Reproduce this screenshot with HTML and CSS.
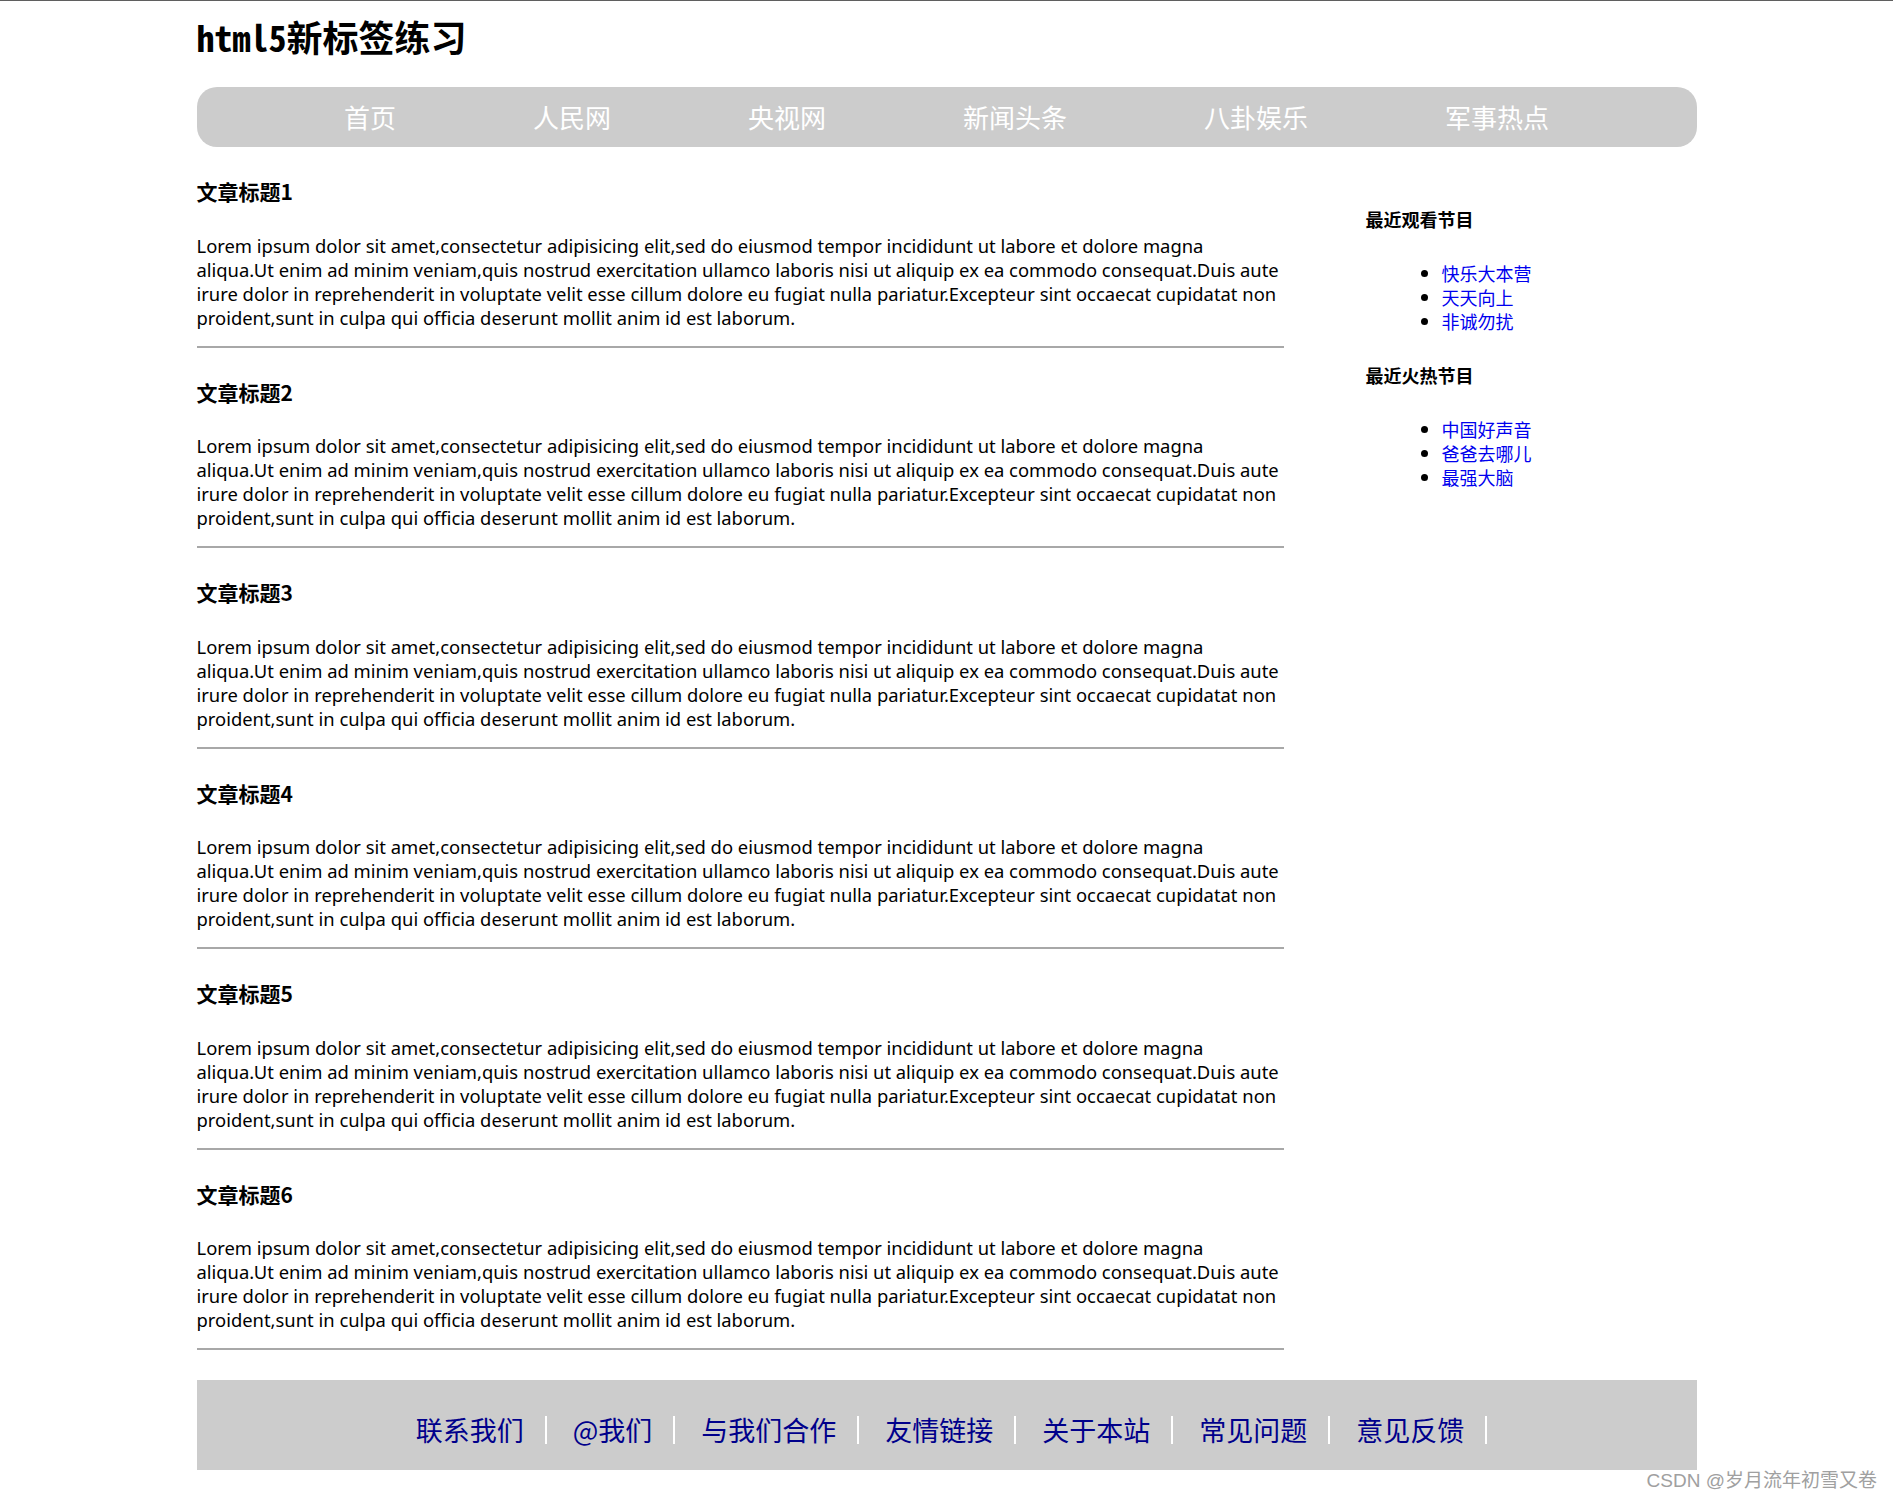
FILE: index.html
```html
<!DOCTYPE html>
<html lang="zh-CN">
<head>
<meta charset="utf-8">
<title>html5新标签练习</title>
<link rel="stylesheet" href="styles.css">
</head>
<body>
<div class="page">
  <header class="site-header">
    <h1 class="site-title">html5新标签练习</h1>
    <nav class="main-nav">
      <a href="#">首页</a>
      <a href="#">人民网</a>
      <a href="#">央视网</a>
      <a href="#">新闻头条</a>
      <a href="#">八卦娱乐</a>
      <a href="#">军事热点</a>
    </nav>
  </header>

  <div class="content">
    <main class="articles">
      <article class="post">
        <h2 class="post-title">文章标题1</h2>
        <p class="post-text">Lorem ipsum dolor sit amet,consectetur adipisicing elit,sed do eiusmod tempor incididunt ut labore et dolore magna<br>aliqua.Ut enim ad minim veniam,quis nostrud exercitation ullamco laboris nisi ut aliquip ex ea commodo consequat.Duis aute<br>irure dolor in reprehenderit in voluptate velit esse cillum dolore eu fugiat nulla pariatur.Excepteur sint occaecat cupidatat non<br>proident,sunt in culpa qui officia deserunt mollit anim id est laborum.</p>
      </article>
      <article class="post">
        <h2 class="post-title">文章标题2</h2>
        <p class="post-text">Lorem ipsum dolor sit amet,consectetur adipisicing elit,sed do eiusmod tempor incididunt ut labore et dolore magna<br>aliqua.Ut enim ad minim veniam,quis nostrud exercitation ullamco laboris nisi ut aliquip ex ea commodo consequat.Duis aute<br>irure dolor in reprehenderit in voluptate velit esse cillum dolore eu fugiat nulla pariatur.Excepteur sint occaecat cupidatat non<br>proident,sunt in culpa qui officia deserunt mollit anim id est laborum.</p>
      </article>
      <article class="post">
        <h2 class="post-title">文章标题3</h2>
        <p class="post-text">Lorem ipsum dolor sit amet,consectetur adipisicing elit,sed do eiusmod tempor incididunt ut labore et dolore magna<br>aliqua.Ut enim ad minim veniam,quis nostrud exercitation ullamco laboris nisi ut aliquip ex ea commodo consequat.Duis aute<br>irure dolor in reprehenderit in voluptate velit esse cillum dolore eu fugiat nulla pariatur.Excepteur sint occaecat cupidatat non<br>proident,sunt in culpa qui officia deserunt mollit anim id est laborum.</p>
      </article>
      <article class="post">
        <h2 class="post-title">文章标题4</h2>
        <p class="post-text">Lorem ipsum dolor sit amet,consectetur adipisicing elit,sed do eiusmod tempor incididunt ut labore et dolore magna<br>aliqua.Ut enim ad minim veniam,quis nostrud exercitation ullamco laboris nisi ut aliquip ex ea commodo consequat.Duis aute<br>irure dolor in reprehenderit in voluptate velit esse cillum dolore eu fugiat nulla pariatur.Excepteur sint occaecat cupidatat non<br>proident,sunt in culpa qui officia deserunt mollit anim id est laborum.</p>
      </article>
      <article class="post">
        <h2 class="post-title">文章标题5</h2>
        <p class="post-text">Lorem ipsum dolor sit amet,consectetur adipisicing elit,sed do eiusmod tempor incididunt ut labore et dolore magna<br>aliqua.Ut enim ad minim veniam,quis nostrud exercitation ullamco laboris nisi ut aliquip ex ea commodo consequat.Duis aute<br>irure dolor in reprehenderit in voluptate velit esse cillum dolore eu fugiat nulla pariatur.Excepteur sint occaecat cupidatat non<br>proident,sunt in culpa qui officia deserunt mollit anim id est laborum.</p>
      </article>
      <article class="post">
        <h2 class="post-title">文章标题6</h2>
        <p class="post-text">Lorem ipsum dolor sit amet,consectetur adipisicing elit,sed do eiusmod tempor incididunt ut labore et dolore magna<br>aliqua.Ut enim ad minim veniam,quis nostrud exercitation ullamco laboris nisi ut aliquip ex ea commodo consequat.Duis aute<br>irure dolor in reprehenderit in voluptate velit esse cillum dolore eu fugiat nulla pariatur.Excepteur sint occaecat cupidatat non<br>proident,sunt in culpa qui officia deserunt mollit anim id est laborum.</p>
      </article>
    </main>

    <aside class="sidebar">
      <h4 class="side-title">最近观看节目</h4>
      <ul class="side-list">
        <li><a href="#">快乐大本营</a></li>
        <li><a href="#">天天向上</a></li>
        <li><a href="#">非诚勿扰</a></li>
      </ul>
      <h4 class="side-title">最近火热节目</h4>
      <ul class="side-list">
        <li><a href="#">中国好声音</a></li>
        <li><a href="#">爸爸去哪儿</a></li>
        <li><a href="#">最强大脑</a></li>
      </ul>
    </aside>
  </div>

  <footer class="site-footer">
    <a href="#">联系我们</a><span class="sep"></span>
    <a href="#">@我们</a><span class="sep"></span>
    <a href="#">与我们合作</a><span class="sep"></span>
    <a href="#">友情链接</a><span class="sep"></span>
    <a href="#">关于本站</a><span class="sep"></span>
    <a href="#">常见问题</a><span class="sep"></span>
    <a href="#">意见反馈</a><span class="sep"></span>
  </footer>
</div>
<div class="watermark">CSDN @岁月流年初雪又卷</div>
</body>
</html>
```

FILE: styles.css
```css
html, body {
  margin: 0;
  padding: 0;
  background: #fff;
}

body {
  border-top: 1px solid #5f5f5f;
  font-family: "Noto Sans", "Noto Sans CJK SC", sans-serif;
  color: #000;
}

.page {
  width: 1500px;
  margin: 0 auto;
}

.site-title {
  margin: 11px 0 0;
  font-family: "Noto Sans Mono CJK SC", "Noto Sans CJK SC", monospace;
  font-size: 36px;
  line-height: 48px;
  font-weight: 700;
}

.main-nav {
  margin-top: 27px;
  height: 60px;
  background: #cccccc;
  border-radius: 20px;
  display: flex;
  justify-content: center;
  align-items: center;
  gap: 137px;
}

.main-nav a {
  color: #fff;
  text-decoration: none;
  font-family: "Noto Sans CJK SC", sans-serif;
  font-size: 26px;
  line-height: 36px;
}

.content {
  margin-top: 30px;
  display: flex;
  justify-content: space-between;
  align-items: flex-start;
}

.articles {
  width: 1087px;
}

.post {
  padding-bottom: 16px;
  border-bottom: 2px solid #a8a8a8;
  margin-bottom: 30px;
}

.post-title {
  margin: 0 0 28.5px;
  font-family: "Noto Sans CJK SC", sans-serif;
  font-size: 21px;
  line-height: 28px;
  font-weight: 700;
}

.post-text {
  margin: 0;
  font-size: 18.4px;
  line-height: 24px;
  white-space: nowrap;
}

.sidebar {
  width: 331px;
}

.side-title {
  margin: 30px 0;
  font-family: "Noto Sans CJK SC", sans-serif;
  font-size: 18px;
  line-height: 24px;
  font-weight: 700;
}

.side-list {
  margin: 30px 0;
  padding-left: 76px;
  font-family: "Noto Sans CJK SC", sans-serif;
  font-size: 18px;
  line-height: 24px;
}

.side-list a {
  color: #0000ee;
  text-decoration: none;
}

.site-footer {
  box-sizing: border-box;
  height: 90px;
  padding: 10px 0 0 10px;
  background: #cccccc;
  display: flex;
  justify-content: center;
  align-items: center;
}

.site-footer a {
  color: #00008b;
  text-decoration: none;
  font-family: "Noto Sans CJK SC", sans-serif;
  font-size: 27px;
  line-height: 36px;
}

.sep {
  width: 2px;
  height: 28px;
  margin: 0 26px 0 21px;
  background: #ffffff;
}

.sep:last-child {
  margin-right: 0;
}

.watermark {
  padding: 0 16px 0 0;
  text-align: right;
  font-family: "Liberation Sans", "Noto Sans CJK SC", sans-serif;
  font-size: 19px;
  line-height: 22px;
  color: #a0a0a0;
}
```
